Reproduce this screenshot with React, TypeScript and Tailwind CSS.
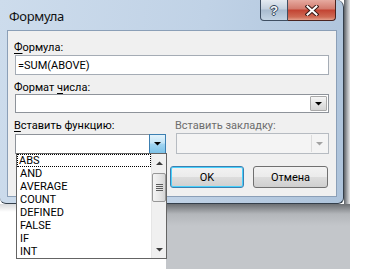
import React from "react";

const ui = "font-['Roboto',sans-serif] text-[11px] leading-[13px] text-black";

const functions = ["ABS", "AND", "AVERAGE", "COUNT", "DEFINED", "FALSE", "IF", "INT"];

const Triangle: React.FC<{ up?: boolean; color?: string }> = ({ up, color = "#000" }) => (
  <svg width="7" height="4" viewBox="0 0 7 4" className="block">
    <path d={up ? "M0 4H7L3.5 0.5Z" : "M0 0H7L3.5 3.5Z"} fill={color} />
  </svg>
);

const TitleBar: React.FC = () => (
  <div className="flex h-[30px] items-start justify-between pr-[7px]">
    <div className="ml-[9px] mt-[8px] font-['Noto_Sans',sans-serif] text-[13px] leading-[16px] tracking-[-0.3px] text-[#111]">
      Формула
    </div>
    <div className="flex h-[21px]">
      <div className="flex w-[28px] items-center justify-center rounded-bl-[4px] border border-t-0 border-[#3f4f63] bg-[linear-gradient(180deg,#e4eaf1,#c3d0de_45%,#a9bbcf_50%,#c4d4e4)] font-['Liberation_Sans',sans-serif] text-[13px] font-bold leading-none text-[#f4f6f8] [text-shadow:1px_0_#34465b,-1px_0_#34465b,0_1px_#34465b,0_-1px_#34465b]">
        ?
      </div>
      <div className="flex w-[48px] items-center justify-center rounded-br-[4px] border border-l-0 border-t-0 border-[#4a2420] bg-[linear-gradient(180deg,#e6aaa0,#d27a6d_45%,#c24332_50%,#cf6b55_85%,#e3a08c)]">
        <svg width="14" height="11" viewBox="0 0 14 11">
          <path d="M2.5 1.5L11.5 9.5M11.5 1.5L2.5 9.5" stroke="#3a1a16" strokeWidth="4" strokeLinecap="square" />
          <path d="M2.5 1.5L11.5 9.5M11.5 1.5L2.5 9.5" stroke="#ffffff" strokeWidth="2" strokeLinecap="square" />
        </svg>
      </div>
    </div>
  </div>
);

const ListBox: React.FC = () => (
  <div className="absolute left-0 top-full z-10 flex h-[106px] w-[151px] border border-[#646464] bg-white">
    <div className="flex-1">
      {functions.map((f, i) => (
        <div
          key={f}
          className={`h-[13px] pl-[1px] ${i === 0 ? "border border-dotted border-black" : "ml-[1px] border border-transparent"}`}
        >
          <span className="relative -top-[1px]">{f}</span>
        </div>
      ))}
    </div>
    <div className="flex w-[15px] flex-col border-l border-[#e6e6e6] bg-[#f0f0f0]">
      <div className="flex h-[17px] items-center justify-center">
        <Triangle up color="#3c3c3c" />
      </div>
      <div className="mx-[0px] mt-[2px] flex h-[29px] flex-col items-center justify-center gap-[1px] rounded-[2px] border border-[#979797] bg-[linear-gradient(90deg,#f4f4f4,#e8e8e8_50%,#d6d6d6)]">
        <div className="h-[1px] w-[7px] bg-[#5c5c5c]" />
        <div className="h-[1px] w-[7px] bg-[#5c5c5c]" />
        <div className="h-[1px] w-[7px] bg-[#5c5c5c]" />
        <div className="h-[1px] w-[7px] bg-[#5c5c5c]" />
      </div>
      <div className="flex-1" />
      <div className="flex h-[17px] items-center justify-center">
        <Triangle color="#3c3c3c" />
      </div>
    </div>
  </div>
);

const Client: React.FC = () => (
  <div className={`flex-1 border border-[#8b9fb7] bg-[#f0f0f0] px-[7px] pt-[10px] ${ui}`}>
    <div className="-ml-[1px]">
      <span className="underline underline-offset-2">Ф</span>ормула:
    </div>
    <div className="mt-[1px] flex h-[20px] items-center border border-[#a5acb5] bg-white pl-[2px]">
      =SUM(ABOVE)
    </div>

    <div className="-ml-[1px] mt-[6px]">
      Формат <span className="underline underline-offset-2">ч</span>исла:
    </div>
    <div className="flex h-[19px] border border-[#8e939a] bg-white p-[1px]">
      <div className="flex-1" />
      <div className="flex w-[17px] items-center justify-center rounded-[1px] border border-[#a9a9a9] bg-[linear-gradient(180deg,#f6f6f6,#e4e4e4_50%,#d5d5d5)]">
        <Triangle />
      </div>
    </div>

    <div className="mt-[6px] flex gap-[10px]">
      <div className="w-[151px]">
        <div className="-ml-[1px]">
          <span className="underline underline-offset-2">В</span>ставить функцию:
        </div>
        <div className="relative mt-[2px] flex h-[20px] border border-[#8e939a] bg-white">
          <div className="flex-1" />
          <div className="-my-[1px] -mr-[1px] flex w-[17px] items-center justify-center border border-[#3c7fb1] bg-[linear-gradient(180deg,#e3f3fc,#c2e4f6_45%,#a2d5f1_50%,#7cc2e8)]">
            <Triangle />
          </div>
          <ListBox />
        </div>
      </div>
      <div className="w-[153px]">
        <div className="-ml-[1px] text-[#6d6d6d]">Вставить закладку:</div>
        <div className="mt-[1px] flex h-[21px] border border-[#b6bbc1] bg-[#f4f4f4]">
          <div className="flex-1" />
          <div className="my-[1px] mr-[1px] flex w-[16px] items-center justify-center border-l border-[#dcdcdc]">
            <Triangle color="#a3a3a3" />
          </div>
        </div>
      </div>
    </div>

    <div className="mt-[12px] flex justify-end gap-[9px] pr-[1px]">
      <button className="flex h-[22px] w-[74px] items-center justify-center rounded-[3px] border border-[#3c7fb1] bg-[linear-gradient(180deg,#f2f2f2,#ebebeb_50%,#dddddd_50%,#cfcfcf)] shadow-[inset_0_0_0_1px_#48d1fc]">
        OK
      </button>
      <button className="flex h-[22px] w-[75px] items-center justify-center rounded-[3px] border border-[#707070] bg-[linear-gradient(180deg,#f2f2f2,#ebebeb_50%,#dddddd_50%,#cfcfcf)]">
        Отмена
      </button>
    </div>
  </div>
);

const Dialog: React.FC = () => (
  <div className="relative flex h-[204px] w-[344px] flex-col rounded-bl-[6px] rounded-br-[6px] rounded-tr-[7px] border-b border-r border-[#343f4b] bg-[linear-gradient(100deg,#cddcec,#c0d2e6_55%,#adc3db)]">
    <TitleBar />
    <div className="flex flex-1 pb-[6px] pl-[7px] pr-[6px]">
      <Client />
    </div>
  </div>
);

export default function App() {
  return (
    <div className="relative h-[269px] w-[366px] overflow-hidden bg-white">
      <div className="flex">
        <Dialog />
        <div className="h-[204px] w-[6px] bg-[linear-gradient(90deg,#5d6166,#a4a7ab_50%,#e4e5e7)]" />
      </div>
      <div className="flex h-[65px]">
        <div className="w-[166px] bg-[linear-gradient(180deg,#d9dadc,#ffffff_8px)]" />
        <div className="w-[184px] bg-[linear-gradient(180deg,#6c6f73,#b3b6ba_10px,#c3c6ca_22px)]" />
      </div>
    </div>
  );
}
